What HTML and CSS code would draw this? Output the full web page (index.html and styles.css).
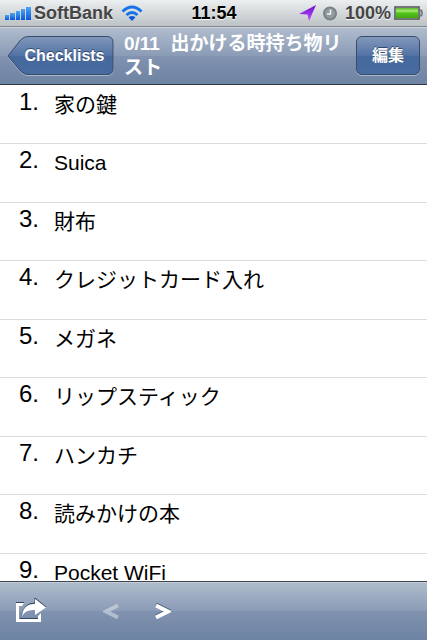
FILE: index.html
```html
<!DOCTYPE html>
<html lang="ja">
<head>
  <meta charset="UTF-8" />
  <meta name="viewport" content="width=device-width, initial-scale=1" />
  <title>Checklists</title>
  <link rel="stylesheet" href="styles.css">
</head>
<body>

  <div class="status">
    <div class="carrier">
      <svg class="signal" width="28" height="16" viewBox="0 0 28 16">
        <defs>
          <linearGradient id="blue" x1="0" y1="0" x2="0" y2="1">
            <stop offset="0" stop-color="#4da4f4" />
            <stop offset="1" stop-color="#0a56dc" />
          </linearGradient>
        </defs>
        <g fill="url(#blue)">
          <rect x="0" y="10" width="4" height="5" />
          <rect x="5" y="8" width="5" height="7" />
          <rect x="11" y="6" width="4" height="9" />
          <rect x="16" y="4" width="4" height="11" />
          <rect x="21" y="2" width="5" height="13" />
        </g>
      </svg>
      <span>SoftBank</span>
      <svg class="wifi" width="22" height="17" viewBox="0 0 22 17">
        <g fill="none" stroke="#1673ea" stroke-width="3">
          <path d="M1.5 6.5 Q11 -2.5 20.500 6.500" />
          <path d="M5.500 10 Q11 5 16.500 10" />
        </g>
        <path d="M7.500 12.300 Q11 9.800 14.500 12.300 L11 16 Z" fill="#0c58dc" />
      </svg>
    </div>
    <div class="clock">11:54</div>
    <div class="power">
      <svg width="17" height="17" viewBox="0 0 17 17">
        <defs>
          <linearGradient id="purple" x1="0" y1="0" x2="0" y2="1">
            <stop offset="0" stop-color="#6a10cc" />
            <stop offset="1" stop-color="#c050ff" />
          </linearGradient>
        </defs>
        <path d="M17 0 L10 16 L8.500 9.500 L0 9 Z" fill="url(#purple)" />
      </svg>
      <svg class="alarm" width="14" height="15" viewBox="0 0 14 15">
        <circle cx="7" cy="7.500" r="6" fill="#949b9e" stroke="#7a8387" stroke-width="2" />
        <path d="M7.500 3.500 V8 H4" fill="none" stroke="#f1f3f3" stroke-width="1.500" />
      </svg>
      <span>100%</span>
      <svg width="29" height="14" viewBox="0 0 29 14">
        <defs>
          <linearGradient id="green" x1="0" y1="0" x2="0" y2="1">
            <stop offset="0" stop-color="#5fb82c" />
            <stop offset="0.300" stop-color="#a6ec72" />
            <stop offset="0.500" stop-color="#55c51c" />
            <stop offset="1" stop-color="#43a80c" />
          </linearGradient>
        </defs>
        <rect x="1" y="1" width="24" height="12" fill="#e6f4dc" stroke="#4c5154" stroke-width="1.500" />
        <rect x="2" y="2" width="22" height="10" fill="url(#green)" />
        <path d="M26 4 H27 Q28 4 28 5 V9 Q28 10 27 10 H26" fill="#a9b0b3" stroke="#4c5154" />
      </svg>
    </div>
  </div>

  <header class="navbar">
    <button class="back">
      <svg class="back-shape" width="108" height="40" viewBox="0 0 108 40">
        <defs>
          <linearGradient id="backFill" x1="0" y1="0" x2="0" y2="1">
            <stop offset="0" stop-color="#8298bb" />
            <stop offset="0.500" stop-color="#5273a4" />
            <stop offset="0.510" stop-color="#45689d" />
            <stop offset="1" stop-color="#486c9f" />
          </linearGradient>
        </defs>
        <path d="M1 21 L13.500 5 Q17 1.500 21 1.500 H100 Q106 1.500 106 7.500 V33.500 Q106 39.500 100 39.500 H21 Q17 39.500 13.500 36 Z" fill="none" stroke="#a9b8ce" />
        <path d="M1 20 L13.500 4 Q17 0.500 21 0.500 H100 Q106 0.500 106 6.500 V32.500 Q106 38.500 100 38.500 H21 Q17 38.500 13.500 35 Z" fill="url(#backFill)" stroke="#384c6b" />
      </svg>
      <span>Checklists</span>
    </button>
    <h1>0/11&nbsp; 出かける時持ち物リスト</h1>
    <button class="edit">編集</button>
  </header>

  <ol class="items">
    <li><span class="num">1.</span><span>家の鍵</span></li>
    <li><span class="num">2.</span><span>Suica</span></li>
    <li><span class="num">3.</span><span>財布</span></li>
    <li><span class="num">4.</span><span>クレジットカード入れ</span></li>
    <li><span class="num">5.</span><span>メガネ</span></li>
    <li><span class="num">6.</span><span>リップスティック</span></li>
    <li><span class="num">7.</span><span>ハンカチ</span></li>
    <li><span class="num">8.</span><span>読みかけの本</span></li>
    <li><span class="num">9.</span><span>Pocket WiFi</span></li>
  </ol>

  <footer class="toolbar">
    <button class="share" aria-label="共有">
      <svg width="32" height="28" viewBox="0 0 32 28">
        <path d="M1 5.500 H9 M5 21.500 H23 M7 18 Q9 6 20 6 V1 L31 10" fill="none" stroke="#34465f" />
        <path d="M1 6 H9 L7 9 H4 V22 H23 V19 L26 16 V25 H1 Z" fill="#fff" />
        <path d="M7 19 Q8 7 20 7 V2 L31 10.500 L20 18 V13 Q11 12 7 19 Z" fill="#fff" />
      </svg>
    </button>
    <button class="arrow" aria-label="前へ" disabled>
      <svg width="16" height="17" viewBox="0 0 16 17">
        <path class="edge" d="M15 1.500 L3 7.500 L15 13.500" />
        <path d="M15 2.500 L3 8.500 L15 14.500" />
      </svg>
    </button>
    <button class="arrow" aria-label="次へ">
      <svg width="16" height="17" viewBox="0 0 16 17">
        <path class="edge" d="M1 1.500 L13 7.500 L1 13.500" />
        <path d="M1 2.500 L13 8.500 L1 14.500" />
      </svg>
    </button>
  </footer>

</body>
</html>
```

FILE: styles.css
```css
* {
  box-sizing: border-box;
}
body {
  margin: 0;
  height: 100vh;
  display: flex;
  flex-direction: column;
  overflow: hidden;
  background: #fff;
  color: #000;
  font-family: "Liberation Sans", "Noto Sans CJK JP", sans-serif;
}
button {
  padding: 0;
  border: none;
  background: none;
  color: #fff;
  font-family: inherit;
  cursor: pointer;
}
svg {
  display: block;
}

/* Status bar */
.status {
  flex: none;
  display: grid;
  grid-template-columns: 1fr auto 1fr;
  align-items: center;
  height: 27px;
  padding: 0 4px 0 5px;
  background: linear-gradient(#eceff0, #bcc2c5);
  border-bottom: 1px solid #80878d;
  font-size: 18px;
  font-weight: bold;
  line-height: 26px;
  text-shadow: 0 1px 0 #f4f6f6;
}
.carrier, .power {
  display: flex;
  align-items: center;
  color: #454545;
}
.signal {
  margin-right: 1px;
}
.wifi {
  margin-left: 8px;
}
.power {
  justify-content: flex-end;
  gap: 3px;
}
.alarm {
  margin: 0 5px 0 4px;
}

/* Navigation bar */
.navbar {
  flex: none;
  display: flex;
  align-items: flex-start;
  height: 58px;
  padding: 4px 7px 0;
  background: linear-gradient(#b0bccd, #8a9bb6 50%, #8092b0 51%, #6d84a2);
  border-top: 1px solid #cdd5df;
  border-bottom: 1px solid #2d3642;
  color: #fff;
}
.navbar h1 {
  flex: 1;
  margin: 0 12px 0 10px;
  font-size: 19px;
  line-height: 24px;
}
.back {
  position: relative;
  width: 107px;
  height: 40px;
  margin-top: 4px;
  padding-left: 8px;
  font-size: 16px;
  font-weight: bold;
  text-shadow: 0 -1px 0 #33486a;
}
.back-shape {
  position: absolute;
  top: 0;
  left: 0;
}
.back span {
  position: relative;
}
.edit {
  width: 64px;
  height: 39px;
  margin-top: 4px;
  padding-bottom: 3px;
  border: 1px solid #384c6b;
  border-radius: 6px;
  background: linear-gradient(#8298bb, #5273a4 50%, #45689d 51%, #486c9f);
  box-shadow: 0 1px 0 #a9b8ce;
  font-size: 16px;
  font-weight: bold;
  text-shadow: 0 -1px 0 #33486a;
}

/* Checklist */
.items {
  flex: 1;
  min-height: 0;
  margin: 0;
  padding: 1px 0 0;
  overflow: hidden;
  list-style: none;
  font-size: 21px;
}
.items li {
  display: flex;
  height: 58px;
  padding-top: 2px;
  border-bottom: 1px solid #dcdcdc;
  line-height: 33px;
}
.items li:nth-child(even) {
  height: 59px;
}
.num {
  width: 39px;
  margin-right: 15px;
  font-size: 24px;
  line-height: 28px;
  text-align: right;
}

/* Toolbar */
.toolbar {
  flex: none;
  display: flex;
  align-items: center;
  height: 59px;
  padding: 0 15px;
  background: linear-gradient(#b0bccd, #8a9bb6 50%, #8092b0 51%, #6d84a2);
  border-top: 1px solid #40474f;
  box-shadow: inset 0 1px 0 #c3ccd8;
}
.share {
  margin-right: 56px;
}
.arrow {
  margin-right: 36px;
}
.arrow path {
  fill: none;
  stroke: #fff;
  stroke-width: 4;
}
.arrow .edge {
  stroke: #4c607d;
}
.arrow:disabled {
  opacity: 0.4;
}
.arrow:disabled .edge {
  stroke: none;
}
```
